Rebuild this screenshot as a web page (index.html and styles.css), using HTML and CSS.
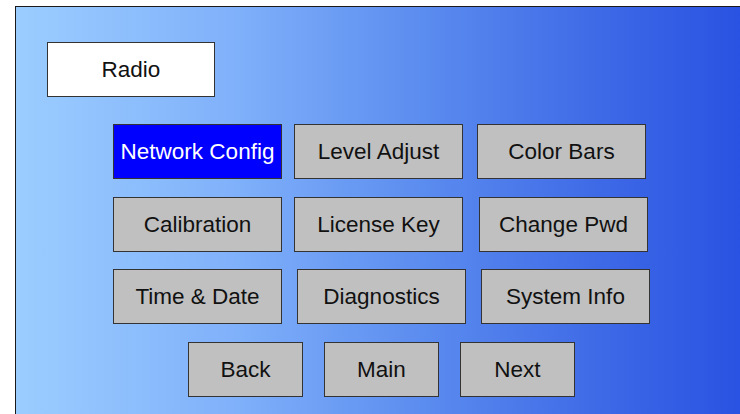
FILE: index.html
```html
<!DOCTYPE html>
<html lang="en">
<head>
  <meta charset="UTF-8">
  <meta name="viewport" content="width=device-width, initial-scale=1.0">
  <title>Radio Setup</title>
  <link rel="stylesheet" href="styles.css">
</head>
<body>
  <div class="screen">
    <div class="title-box">Radio</div>

    <div class="menu">
      <div class="row row-1">
        <button class="btn selected">Network Config</button>
        <button class="btn">Level Adjust</button>
        <button class="btn shift-2">Color Bars</button>
      </div>
      <div class="row row-2">
        <button class="btn">Calibration</button>
        <button class="btn">License Key</button>
        <button class="btn shift-4">Change Pwd</button>
      </div>
      <div class="row row-3">
        <button class="btn">Time &amp; Date</button>
        <button class="btn">Diagnostics</button>
        <button class="btn">System Info</button>
      </div>
      <div class="row nav">
        <button class="btn small">Back</button>
        <button class="btn small">Main</button>
        <button class="btn small">Next</button>
      </div>
    </div>
  </div>
</body>
</html>
```

FILE: styles.css
```css
body {
  margin: 0;
  background-color: #ffffff;
  font-family: 'Liberation Sans', Arial, sans-serif;
  overflow: hidden;
}

.screen {
  margin: 6px 0 0 15px;
  width: 740px;
  height: 420px;
  box-sizing: border-box;
  border: 1px solid #1a1a1a;
  border-right: none;
  border-bottom: none;
  background: linear-gradient(to right, #9ccdff 0%, #7fb0fa 30%, #5b8cef 55%, #3d68e6 80%, #2850e2 100%);
  padding: 35px 0 0 31px;
}

.title-box {
  width: 168px;
  height: 55px;
  box-sizing: border-box;
  background-color: #ffffff;
  border: 1px solid #333;
  display: flex;
  align-items: center;
  justify-content: center;
  font-size: 22.5px;
  color: #111;
}

.menu {
  margin: 27px 0 0 66px;
  display: flex;
  flex-direction: column;
}

.row {
  display: flex;
  gap: 12px;
}

.row-1 {
  margin-bottom: 18px;
}

.row-2 {
  margin-bottom: 17px;
}

.row-3 {
  gap: 15px;
  margin-bottom: 18px;
}

.nav {
  margin-left: 75px;
  gap: 21px;
}

.btn {
  width: 169px;
  height: 55px;
  box-sizing: border-box;
  margin: 0;
  padding: 0;
  background-color: #c0c0c0;
  border: 1px solid #333;
  border-radius: 0;
  font-family: 'Liberation Sans', Arial, sans-serif;
  font-size: 22.5px;
  color: #111;
  cursor: pointer;
}

.btn.small {
  width: 115px;
}

.btn.selected {
  background-color: #0000ff;
  color: #ffffff;
}

.shift-2 {
  margin-left: 2px;
}

.shift-4 {
  margin-left: 4px;
}
```
